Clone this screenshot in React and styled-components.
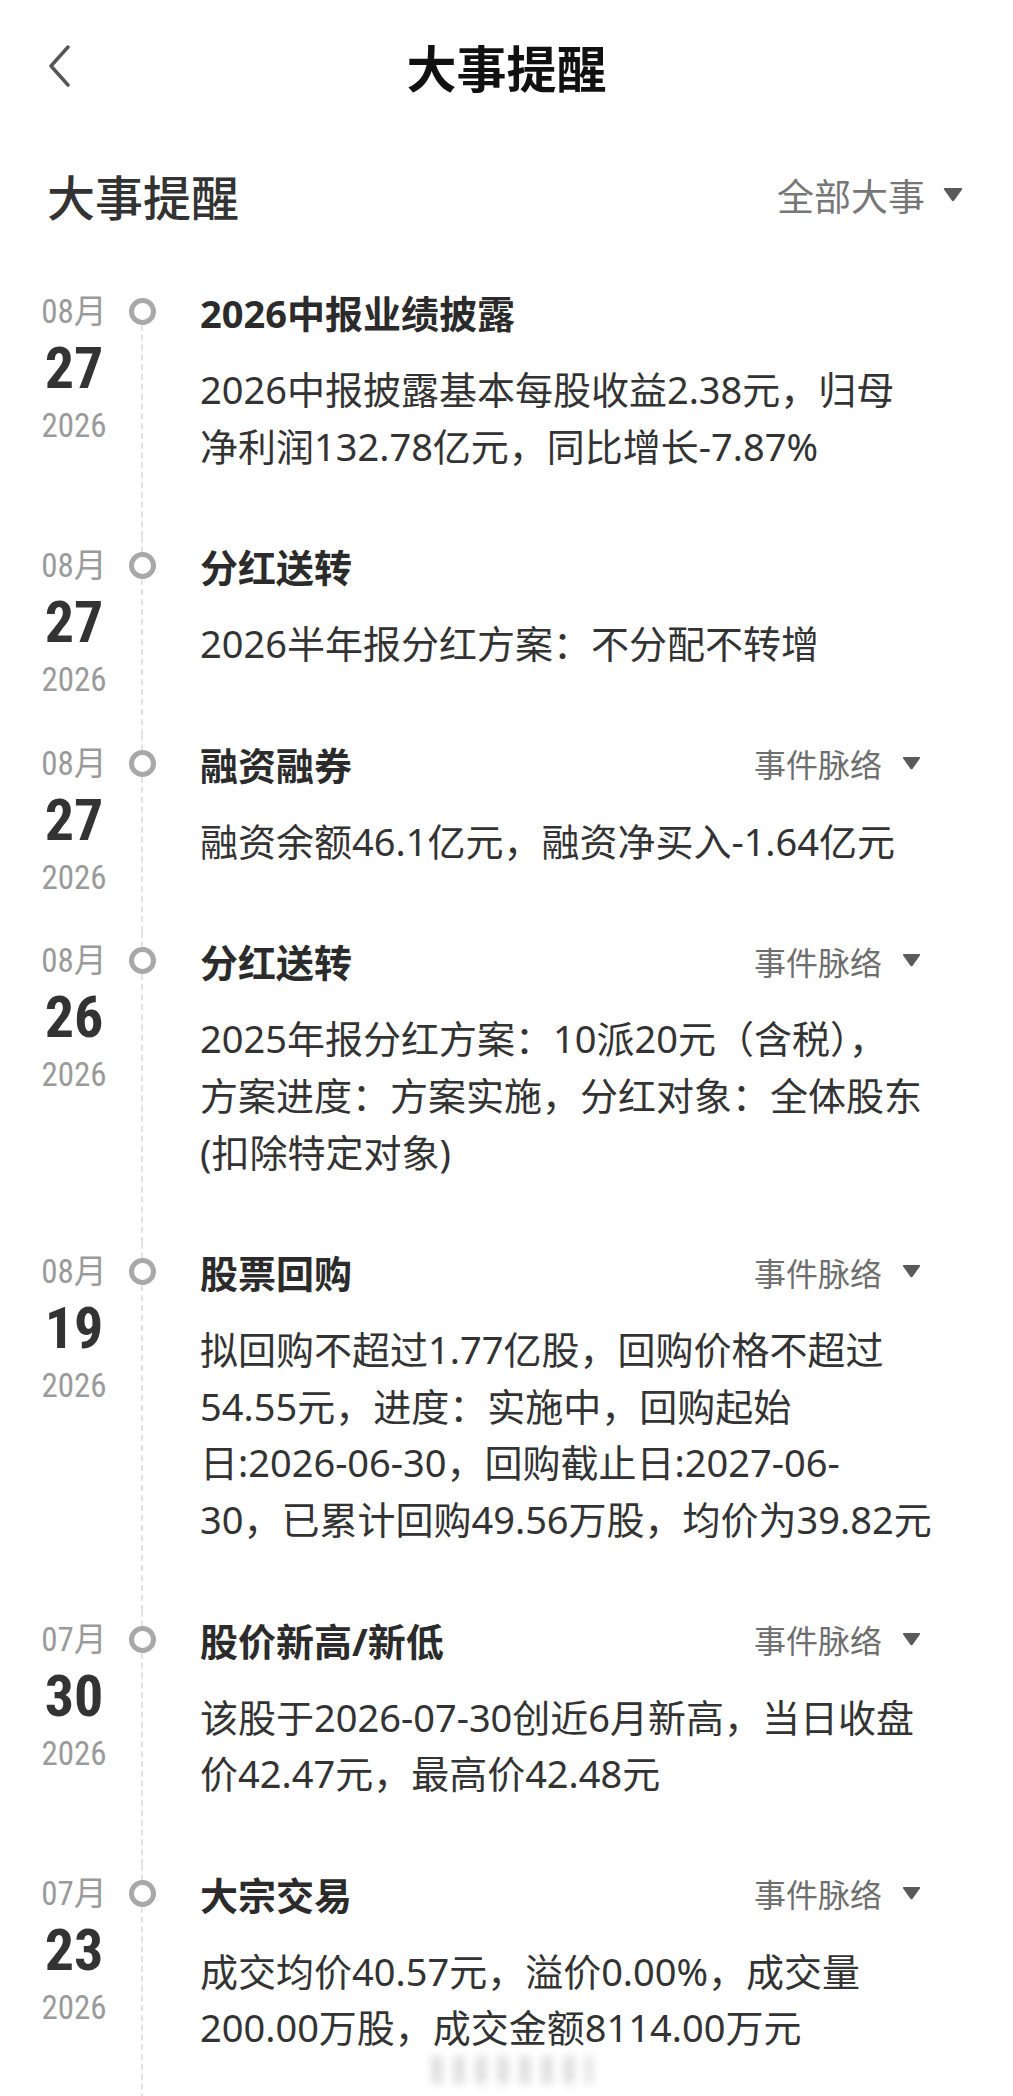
import styled, {createGlobalStyle} from 'styled-components';

const GlobalStyle = createGlobalStyle`
  body {
    margin: 0;
    background: #fff;
    font-family: "Noto Sans", "Noto Sans CJK SC", sans-serif;
  }
`;

const events = [
  {
    month: '08月', day: '27', year: '2026', title: '2026中报业绩披露', menu: false,
    lines: ['2026中报披露基本每股收益2.38元，归母', '净利润132.78亿元，同比增长-7.87%'],
  },
  {
    month: '08月', day: '27', year: '2026', title: '分红送转', menu: false,
    lines: ['2026半年报分红方案：不分配不转增'],
  },
  {
    month: '08月', day: '27', year: '2026', title: '融资融券', menu: true,
    lines: ['融资余额46.1亿元，融资净买入-1.64亿元'],
  },
  {
    month: '08月', day: '26', year: '2026', title: '分红送转', menu: true,
    lines: ['2025年报分红方案：10派20元（含税），', '方案进度：方案实施，分红对象：全体股东', '(扣除特定对象)'],
  },
  {
    month: '08月', day: '19', year: '2026', title: '股票回购', menu: true,
    lines: [
      '拟回购不超过1.77亿股，回购价格不超过',
      '54.55元，进度：实施中，回购起始',
      '日:2026-06-30，回购截止日:2027-06-',
      '30，已累计回购49.56万股，均价为39.82元',
    ],
  },
  {
    month: '07月', day: '30', year: '2026', title: '股价新高/新低', menu: true,
    lines: ['该股于2026-07-30创近6月新高，当日收盘', '价42.47元，最高价42.48元'],
  },
  {
    month: '07月', day: '23', year: '2026', title: '大宗交易', menu: true,
    lines: ['成交均价40.57元，溢价0.00%，成交量', '200.00万股，成交金额8114.00万元'],
  },
];

function Caret({size}) {
  return (
    <CaretIcon $size={size} viewBox="0 0 20 14">
      <path d="M1 1.5 Q0 0 2 0 H18 Q20 0 19 1.5 L11.2 12.6 Q10 14 8.8 12.6 Z" fill="#5a5a5a" />
    </CaretIcon>
  );
}

export default function App() {
  return (
    <Page>
      <GlobalStyle />
      <NavBar>
        <BackButton aria-label="返回">
          <svg width="24" height="42" viewBox="0 0 24 42">
            <polyline points="21,2 4,21 21,40" fill="none" stroke="#555" strokeWidth="3.4" strokeLinecap="round" strokeLinejoin="round" />
          </svg>
        </BackButton>
        <NavTitle>大事提醒</NavTitle>
        <span />
      </NavBar>

      <SectionHeader>
        <SectionTitle>大事提醒</SectionTitle>
        <Filter>
          全部大事
          <Caret size="big" />
        </Filter>
      </SectionHeader>

      <List>
        {events.map((ev, i) => (
          <Item key={i}>
            <DateCol>
              <Month>{ev.month}</Month>
              <Day>{ev.day}</Day>
              <Year>{ev.year}</Year>
            </DateCol>
            <Rail>
              <RailTop $first={i === 0} />
              <Dot />
              <RailLine />
            </Rail>
            <Content>
              <TitleRow>
                <EventTitle>{ev.title}</EventTitle>
                {ev.menu && (
                  <EventMenu>
                    事件脉络
                    <Caret size="small" />
                  </EventMenu>
                )}
              </TitleRow>
              <Body>
                {ev.lines.map((l, j) => (
                  <Line key={j}>{l}</Line>
                ))}
              </Body>
            </Content>
          </Item>
        ))}
      </List>
      <Watermark />
    </Page>
  );
}

const Page = styled.div`
  width: 1013px;
  min-height: 2096px;
  background: #fff;
  overflow: hidden;
`;

const NavBar = styled.header`
  height: 132px;
  display: grid;
  grid-template-columns: 1fr auto 1fr;
  align-items: center;
`;

const BackButton = styled.button`
  justify-self: start;
  margin-left: 47px;
  padding: 0;
  border: none;
  background: transparent;
  display: flex;
`;

const NavTitle = styled.h1`
  margin: 0;
  font-size: 50px;
  font-weight: 700;
  color: #111;
`;

const SectionHeader = styled.div`
  height: 126px;
  display: flex;
  align-items: center;
  justify-content: space-between;
  padding: 0 50px 0 47px;
`;

const SectionTitle = styled.h2`
  margin: 0;
  font-size: 48px;
  font-weight: 500;
  color: #333;
`;

const Filter = styled.div`
  display: flex;
  align-items: center;
  gap: 18px;
  font-size: 37px;
  color: #777;
`;

const CaretIcon = styled.svg`
  width: ${p => (p.$size === 'big' ? '20px' : '19px')};
  height: ${p => (p.$size === 'big' ? '14px' : '13px')};
  flex-shrink: 0;
`;

const List = styled.div`
  padding-top: 25px;
`;

const Item = styled.div`
  display: flex;
  padding-left: 34px;
  padding-right: 89px;
`;

const DateCol = styled.div`
  width: 80px;
  flex-shrink: 0;
  display: flex;
  flex-direction: column;
  align-items: center;
  font-family: "Liberation Sans Narrow", "Roboto Condensed", "DejaVu Sans Condensed", "Noto Sans CJK SC", sans-serif;
`;

const Month = styled.div`
  height: 57px;
  line-height: 57px;
  font-size: 33px;
  color: #9a9a9a;
`;

const Day = styled.div`
  height: 57px;
  line-height: 57px;
  font-size: 58px;
  font-weight: 700;
  color: #333;
`;

const Year = styled.div`
  height: 57px;
  line-height: 57px;
  font-size: 33px;
  color: #9a9a9a;
`;

const Rail = styled.div`
  width: 56px;
  flex-shrink: 0;
  display: flex;
  flex-direction: column;
  align-items: center;
`;

const RailTop = styled.div`
  height: 15px;
  flex-shrink: 0;
  border-left: 2px dashed ${p => (p.$first ? 'transparent' : '#e2e2e2')};
`;

const Dot = styled.div`
  width: 27px;
  height: 27px;
  box-sizing: border-box;
  border: 5px solid #a8a8a8;
  border-radius: 50%;
  background: #fff;
  flex-shrink: 0;
`;

const RailLine = styled.div`
  flex: 1;
  border-left: 2px dashed #e2e2e2;
`;

const Content = styled.div`
  flex: 1;
  min-width: 0;
  margin-left: 30px;
  padding-bottom: 63px;
`;

const TitleRow = styled.div`
  height: 57px;
  display: flex;
  align-items: center;
  justify-content: space-between;
`;

const EventTitle = styled.div`
  font-size: 38px;
  font-weight: 700;
  color: #2b2b2b;
`;

const EventMenu = styled.div`
  display: flex;
  align-items: center;
  gap: 20px;
  font-size: 32px;
  color: #6e6e6e;
  margin-right: 3px;
`;

const Body = styled.div`
  margin-top: 21px;
`;

const Line = styled.div`
  height: 56.6px;
  font-size: 38px;
  line-height: 56.6px;
  color: #333;
  white-space: nowrap;
`;

const Watermark = styled.div`
  position: fixed;
  left: 432px;
  top: 2056px;
  width: 160px;
  height: 28px;
  filter: blur(4px);
  opacity: 0.35;
  background: repeating-linear-gradient(90deg, #999 0 10px, transparent 10px 22px);
`;
